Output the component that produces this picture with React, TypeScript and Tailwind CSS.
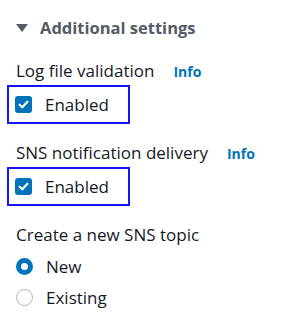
import { useState } from "react";

function Check({ checked }: { checked: boolean }) {
  return (
    <span
      className={`flex h-[17px] w-[17px] items-center justify-center rounded-[3px] ${
        checked ? "bg-[#0073bb]" : "border-2 border-[#aab7b8] bg-white"
      }`}
    >
      {checked ? (
        <svg width="13" height="13" viewBox="0 0 12 12" fill="none" aria-hidden="true">
          <path d="M2.4 6.2 4.9 8.6 9.6 3.4" stroke="white" strokeWidth="2" strokeLinecap="round" strokeLinejoin="round" />
        </svg>
      ) : null}
    </span>
  );
}

function Radio({ checked }: { checked: boolean }) {
  return checked ? (
    <span className="h-[17px] w-[17px] rounded-full border-[5px] border-[#0073bb] bg-white" />
  ) : (
    <span className="h-[17px] w-[17px] rounded-full border-[1.5px] border-[#aab7b8] bg-white" />
  );
}

function CheckField({ label, value }: { label: string; value: boolean }) {
  return (
    <div className="flex flex-col">
      <div className="flex items-baseline gap-[19px] pl-4">
        <span className="text-[17px] leading-[22px] text-[#16191f]">{label}</span>
        <span className="text-[14px] font-bold text-[#0073bb]">Info</span>
      </div>
      <div className="ml-[7px] mt-[3px] flex h-[39px] w-[123px] items-center gap-[13px] border-2 border-[#1414f5] pl-[6px]">
        <Check checked={value} />
        <span className="text-[17px] text-[#16191f]">Enabled</span>
      </div>
    </div>
  );
}

export default function App() {
  const [topic] = useState("new");

  return (
    <div className="h-[336px] w-[293px] bg-white font-['Open_Sans',sans-serif]">
      <div className="flex items-center gap-[12px] pl-4 pt-[16px]">
        <svg width="12" height="10" viewBox="0 0 12 10" aria-hidden="true">
          <path d="M0 1h12L6 9z" fill="#545b64" />
        </svg>
        <span className="text-[16.5px] font-bold leading-[24px] text-[#545b64]">Additional settings</span>
      </div>

      <div className="mt-[20px] flex flex-col gap-[18px]">
        <CheckField label="Log file validation" value={true} />
        <CheckField label="SNS notification delivery" value={true} />
      </div>

      <div className="mt-[18px] flex flex-col pl-4">
        <span className="text-[17px] leading-[22px] text-[#16191f]">Create a new SNS topic</span>
        <div className="mt-[9px] flex flex-col gap-[8px]">
          {[
            { id: "new", label: "New" },
            { id: "existing", label: "Existing" },
          ].map((opt) => (
            <div key={opt.id} className="flex items-center gap-[13px]">
              <Radio checked={topic === opt.id} />
              <span className="text-[17px] leading-[23px] text-[#16191f]">{opt.label}</span>
            </div>
          ))}
        </div>
      </div>
    </div>
  );
}
